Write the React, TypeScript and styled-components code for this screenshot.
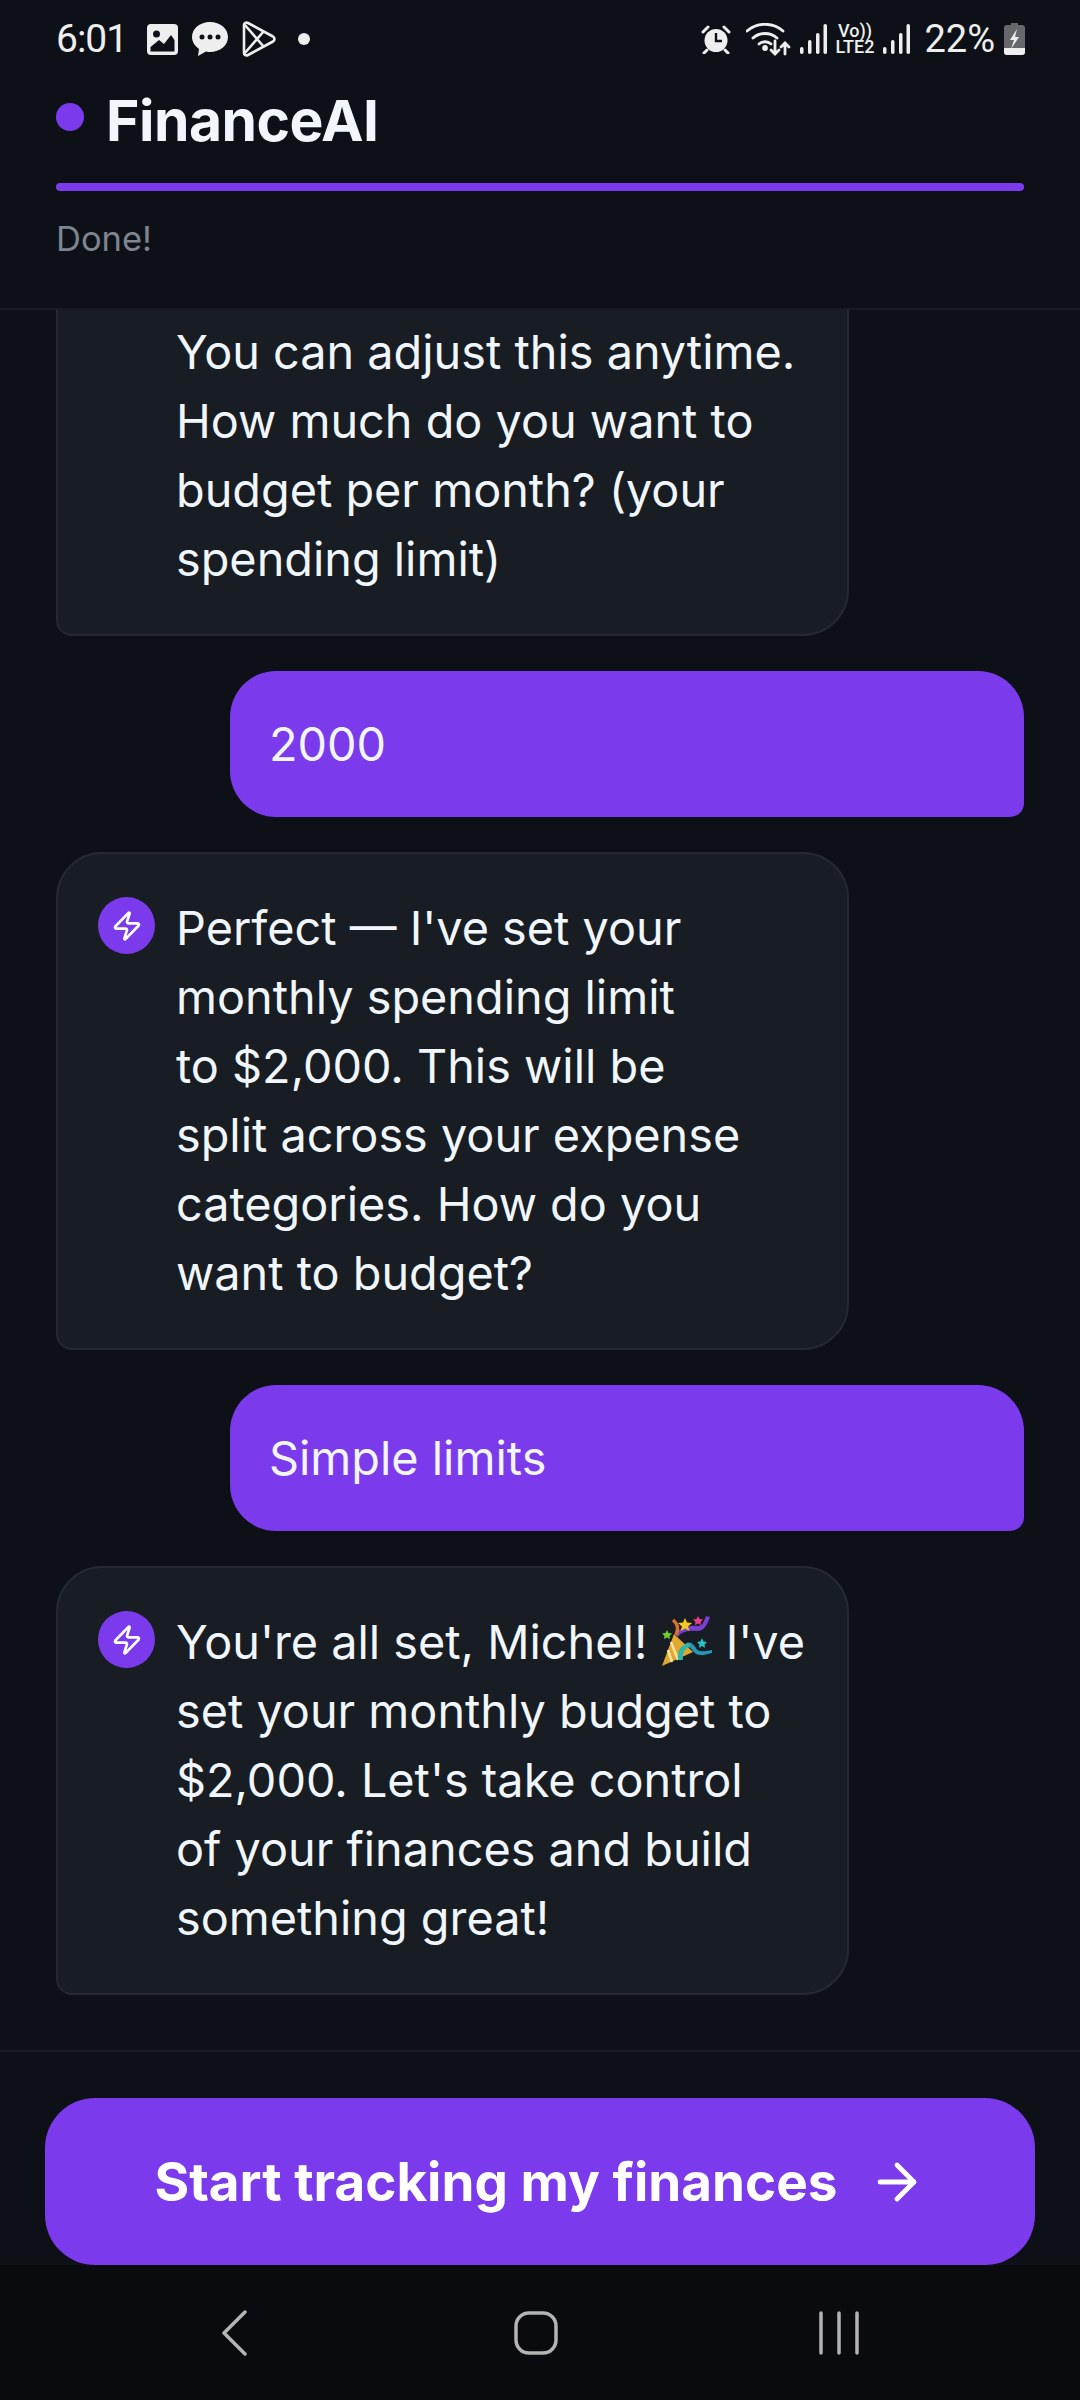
import React from 'react';
import styled, {createGlobalStyle} from 'styled-components';
import {ArrowRight, Zap} from 'lucide-react';

const GlobalStyle = createGlobalStyle`
    * {
        box-sizing: border-box;
    }

    body {
        margin: 0;
        background: #0d1117;
        font-family: Inter, "Liberation Sans", sans-serif;
    }
`;

type Message = {
    id: number;
    from: 'bot' | 'user';
    lines: React.ReactNode[];
}

const PartyPopper = () => (
    <Popper viewBox="0 0 52 52" role="img" aria-label="party popper">
        <path d="M13 18 L32 36 L1 50 Z" fill="#e0a82e"/>
        <path d="M10 26 L17 44 M7 34 L11 46" stroke="#f7e3a1" strokeWidth="2.5"/>
        <path d="M17 21 C20 15 29 14 37 15 C42 15 46 10 49 1 L45 0 C43 6 41 10 37 10 C29 9 20 11 14 18 Z" fill="#7a3fd0"/>
        <path d="M12 4 C17 8 18 13 15 19" stroke="#d9722a" strokeWidth="3.5" fill="none"/>
        <path d="M24 2 L26 6.500 L31 7 L27 10.500 L28.500 15 L24 12.500 L19.500 15 L21 10.500 L17 7 L22 6.500 Z" fill="#f6c91f"/>
        <path d="M37 0 L38.500 3 L42 3.500 L39.500 6 L40 9 L37 7.500 L34 9 L34.500 6 L32 3.500 L35.500 3 Z" fill="#ea3f8c"/>
        <path d="M6 14 L7.500 17 L11 17.500 L8.500 20 L9 23 L6 21.500 L3 23 L3.500 20 L1 17.500 L4.500 17 Z" fill="#6fcb2f"/>
        <path d="M41 22 L42.500 25.500 L46 26 L43.500 28.500 L44 32 L41 30 L38 32 L38.500 28.500 L36 26 L39.500 25.500 Z" fill="#27c4c4"/>
        <path d="M24 28 C28 25 32 27 35 32 C37 36 41 36 51 34 L51 37 C41 40 35 40 32 35 C29 31 27 30 25 32 Z" fill="#2a93b8"/>
        <path d="M17 44 C16 34 20 28 29 27 L29 31 C24 32 21 37 22 44 Z" fill="#2fb6a8"/>
    </Popper>
);

const messages: Message[] = [
    {
        id: 1,
        from: 'bot',
        // scrolled past the top of the chat, the start of this message is out of view
        lines: ['\u00a0', '\u00a0', 'You can adjust this anytime.', 'How much do you want to', 'budget per month? (your', 'spending limit)'],
    },
    {id: 2, from: 'user', lines: ['2000']},
    {
        id: 3,
        from: 'bot',
        lines: ["Perfect — I've set your", 'monthly spending limit', 'to $2,000. This will be', 'split across your expense', 'categories. How do you', 'want to budget?'],
    },
    {id: 4, from: 'user', lines: ['Simple limits']},
    {
        id: 5,
        from: 'bot',
        lines: [
            <>You're all set, Michel! <PartyPopper/> I've</>,
            'set your monthly budget to',
            "$2,000. Let's take control",
            'of your finances and build',
            'something great!',
        ],
    },
];

const SignalBars = () => (
    <svg width="27" height="30" viewBox="0 0 27 30" fill="#eeeeee">
        <rect x="0" y="23" width="3.500" height="7" rx="1.700"/>
        <rect x="8" y="16" width="3.500" height="14" rx="1.700"/>
        <rect x="16" y="9" width="3.500" height="21" rx="1.700"/>
        <rect x="23.500" y="0" width="3.500" height="30" rx="1.700"/>
    </svg>
);

const App: React.FC = () => {
    return (
        <Screen>
            <GlobalStyle/>
            <Header>
                <StatusBar>
                    <StatusLeft>
                        <Clock>6:01</Clock>
                        <svg width="31" height="31" viewBox="0 0 31 31">
                            <rect width="31" height="31" rx="4" fill="#eeeeee"/>
                            <path d="M3.500 27.500 V23 L12 16 L17 20 L24 11 L27.500 16 V27.500 Z" fill="#0d1117"/>
                            <circle cx="9.500" cy="10" r="3.500" fill="#0d1117"/>
                        </svg>
                        <svg width="36" height="36" viewBox="0 0 36 36">
                            <path d="M18 1 C8 1 0 7.500 0 16 C0 21 3 25 7 28 L6 35 L14 30.500 C15.500 31 17 31 18 31 C28 31 36 24.500 36 16 C36 7.500 28 1 18 1 Z" fill="#eeeeee"/>
                            <circle cx="10" cy="16" r="2.500" fill="#0d1117"/>
                            <circle cx="18" cy="16" r="2.500" fill="#0d1117"/>
                            <circle cx="26" cy="16" r="2.500" fill="#0d1117"/>
                        </svg>
                        <svg width="34" height="36" viewBox="0 0 34 36" fill="none" stroke="#eeeeee" strokeWidth="2.600" strokeLinejoin="round">
                            <path d="M2 4 C2 2 4 1 6 2 L31 15.500 C33 17 33 19 31 20.500 L6 34 C4 35 2 34 2 32 Z"/>
                            <path d="M2 3 L22 26 M2 33 L22 10"/>
                        </svg>
                        <NotificationDot/>
                    </StatusLeft>
                    <StatusRight>
                        <svg width="30" height="29" viewBox="0 0 30 29">
                            <circle cx="15" cy="15.500" r="11.500" fill="#eeeeee"/>
                            <path d="M15 8 V16 H21" stroke="#0d1117" strokeWidth="2.400" fill="none"/>
                            <path d="M2 7 L7 2 M28 7 L23 2 M6 25 L3 28 M24 25 L27 28" stroke="#eeeeee" strokeWidth="3" strokeLinecap="round"/>
                        </svg>
                        <WifiIcon width="45" height="33" viewBox="0 0 45 33" fill="none" stroke="#eeeeee" strokeWidth="2.800" strokeLinecap="round">
                            <path d="M1 8 C11 -1 27 -1 37 8"/>
                            <path d="M7 15 C14 9 24 9 31 15"/>
                            <path d="M13 21 C16 18 22 18 25 21"/>
                            <circle cx="19" cy="25" r="1.500" fill="#eeeeee"/>
                            <path d="M29 18 V31 M25 27 L29 31 L33 27"/>
                            <path d="M39 31 V20 M35 24 L39 20 L43 24"/>
                        </WifiIcon>
                        <SignalBars/>
                        <NetworkLabel>
                            <span>Vo))</span>
                            <span>LTE2</span>
                        </NetworkLabel>
                        <SignalBars/>
                        <BatteryText>22%</BatteryText>
                        <svg width="21" height="32" viewBox="0 0 21 32">
                            <path d="M7 0 H14 V2 H18 C20 2 21 3 21 5 V29 C21 31 20 32 18 32 H3 C1 32 0 31 0 29 V5 C0 3 1 2 3 2 H7 Z" fill="#66686c"/>
                            <path d="M0 25 H21 V29 C21 31 20 32 18 32 H3 C1 32 0 31 0 29 Z" fill="#eeeeee"/>
                            <path d="M13 6 L6 17 H10 L7 26 L15 14 H11 Z" fill="#eeeeee"/>
                        </svg>
                    </StatusRight>
                </StatusBar>
                <Brand>
                    <BrandDot/>
                    <BrandName>FinanceAI</BrandName>
                </Brand>
                <Progress/>
                <ProgressLabel>Done!</ProgressLabel>
            </Header>

            <Chat>
                {messages.map(message => message.from === 'user' ? (
                    <UserBubble key={message.id}>
                        {message.lines.map((line, i) => <Line key={i}>{line}</Line>)}
                    </UserBubble>
                ) : (
                    <BotBubble key={message.id}>
                        <Avatar>
                            <Zap size={32} strokeWidth={2}/>
                        </Avatar>
                        <div>
                            {message.lines.map((line, i) => <Line key={i}>{line}</Line>)}
                        </div>
                    </BotBubble>
                ))}
            </Chat>

            <Footer>
                <StartButton>
                    Start tracking my finances
                    <ArrowRight size={58} strokeWidth={2}/>
                </StartButton>
            </Footer>

            <NavBar>
                <svg width="27" height="46" viewBox="0 0 27 46" fill="none" stroke="#b4b4b4" strokeWidth="3.500" strokeLinecap="round" strokeLinejoin="round">
                    <path d="M24 2 L3 23 L24 44"/>
                </svg>
                <HomeIcon width="44" height="44" viewBox="0 0 44 44" fill="none" stroke="#b4b4b4" strokeWidth="3.500">
                    <rect x="2" y="2" width="40" height="40" rx="13"/>
                </HomeIcon>
                <svg width="40" height="44" viewBox="0 0 40 44" stroke="#b4b4b4" strokeWidth="3.500" strokeLinecap="round">
                    <path d="M2 2 V42 M20 2 V42 M38 2 V42"/>
                </svg>
            </NavBar>
        </Screen>
    );
}

export default App;

const Screen = styled.div`
    width: 1080px;
    height: 2400px;
    display: flex;
    flex-direction: column;
    background: #0d1117;
    overflow: hidden;
`;

const Header = styled.header`
    height: 310px;
    flex-shrink: 0;
    padding: 0 56px;
    border-bottom: 2px solid #171c22;
`;

const StatusBar = styled.div`
    height: 76px;
    padding-top: 20px;
    display: flex;
    justify-content: space-between;
    color: #eeeeee;
`;

const StatusLeft = styled.div`
    display: flex;
    align-items: center;
    gap: 14px;
    height: 38px;
`;

const StatusRight = styled.div`
    display: flex;
    align-items: center;
    height: 38px;
    gap: 9px;
    margin-right: -1px;
`;

const Clock = styled.span`
    font-family: Roboto, sans-serif;
    font-size: 39px;
    letter-spacing: -1px;
    line-height: 38px;
    margin-right: 6px;
`;

const NotificationDot = styled.span`
    width: 12px;
    height: 12px;
    margin-left: 8px;
    border-radius: 50%;
    background: #eeeeee;
`;

const WifiIcon = styled.svg`
    margin-left: 6px;
`;

const NetworkLabel = styled.span`
    display: flex;
    flex-direction: column;
    align-items: center;
    font-family: Roboto, sans-serif;
    font-weight: 500;
    font-size: 18px;
    line-height: 16px;
    color: #eeeeee;
`;

const BatteryText = styled.span`
    font-family: Roboto, sans-serif;
    font-size: 38px;
    line-height: 38px;
    margin-left: 5px;
`;

const Brand = styled.div`
    display: flex;
    align-items: center;
    gap: 22px;
    height: 70px;
    margin-top: 9px;
`;

const BrandDot = styled.span`
    width: 28px;
    height: 28px;
    border-radius: 50%;
    background: #7c3aed;
    margin-top: -6px;
`;

const BrandName = styled.h1`
    margin: 0;
    font-size: 57px;
    font-weight: 700;
    letter-spacing: -0.5px;
    color: #f0f6fc;
`;

const Progress = styled.div`
    height: 8px;
    margin-top: 28px;
    border-radius: 4px;
    background: #7c3aed;
`;

const ProgressLabel = styled.div`
    margin-top: 26px;
    font-size: 34.5px;
    line-height: 44px;
    color: #7d8590;
`;

const Chat = styled.main`
    flex: 1;
    min-height: 0;
    display: flex;
    flex-direction: column;
    justify-content: flex-end;
    gap: 35px;
    padding: 0 56px 55px;
    overflow: hidden;
`;

const BotBubble = styled.div`
    width: 793px;
    flex-shrink: 0;
    display: flex;
    gap: 21px;
    padding: 40px 38px 40px 40px;
    background: #181d23;
    border: 2px solid #24292e;
    border-radius: 46px 46px 46px 16px;
`;

const UserBubble = styled.div`
    align-self: flex-end;
    width: 794px;
    flex-shrink: 0;
    padding: 38.500px 39px;
    background: #7c3aed;
    color: #ffffff;
    border-radius: 46px 46px 14px 46px;
`;

const Avatar = styled.div`
    width: 57px;
    height: 57px;
    margin-top: 3px;
    flex-shrink: 0;
    display: flex;
    align-items: center;
    justify-content: center;
    border-radius: 50%;
    background: #7c3aed;
    color: #ffffff;
`;

const Line = styled.div`
    font-size: 46.8px;
    line-height: 69px;
    white-space: nowrap;
    color: #f0f6fc;
`;

const Popper = styled.svg`
    display: inline-block;
    width: 52px;
    height: 52px;
    vertical-align: -9px;
`;

const Footer = styled.footer`
    height: 215px;
    flex-shrink: 0;
    padding: 46px 45px 0;
    border-top: 2px solid #171c22;
`;

const StartButton = styled.button`
    width: 100%;
    height: 167px;
    display: flex;
    align-items: center;
    justify-content: center;
    gap: 30px;
    border: 0;
    border-radius: 50px;
    background: #7c3aed;
    color: #ffffff;
    font-family: inherit;
    font-size: 53px;
    font-weight: 700;
`;

const NavBar = styled.nav`
    height: 135px;
    flex-shrink: 0;
    display: flex;
    align-items: center;
    justify-content: space-between;
    padding: 0 221px;
    background: #0a0b0f;
`;

const HomeIcon = styled.svg`
    margin-left: 5px;
`;
